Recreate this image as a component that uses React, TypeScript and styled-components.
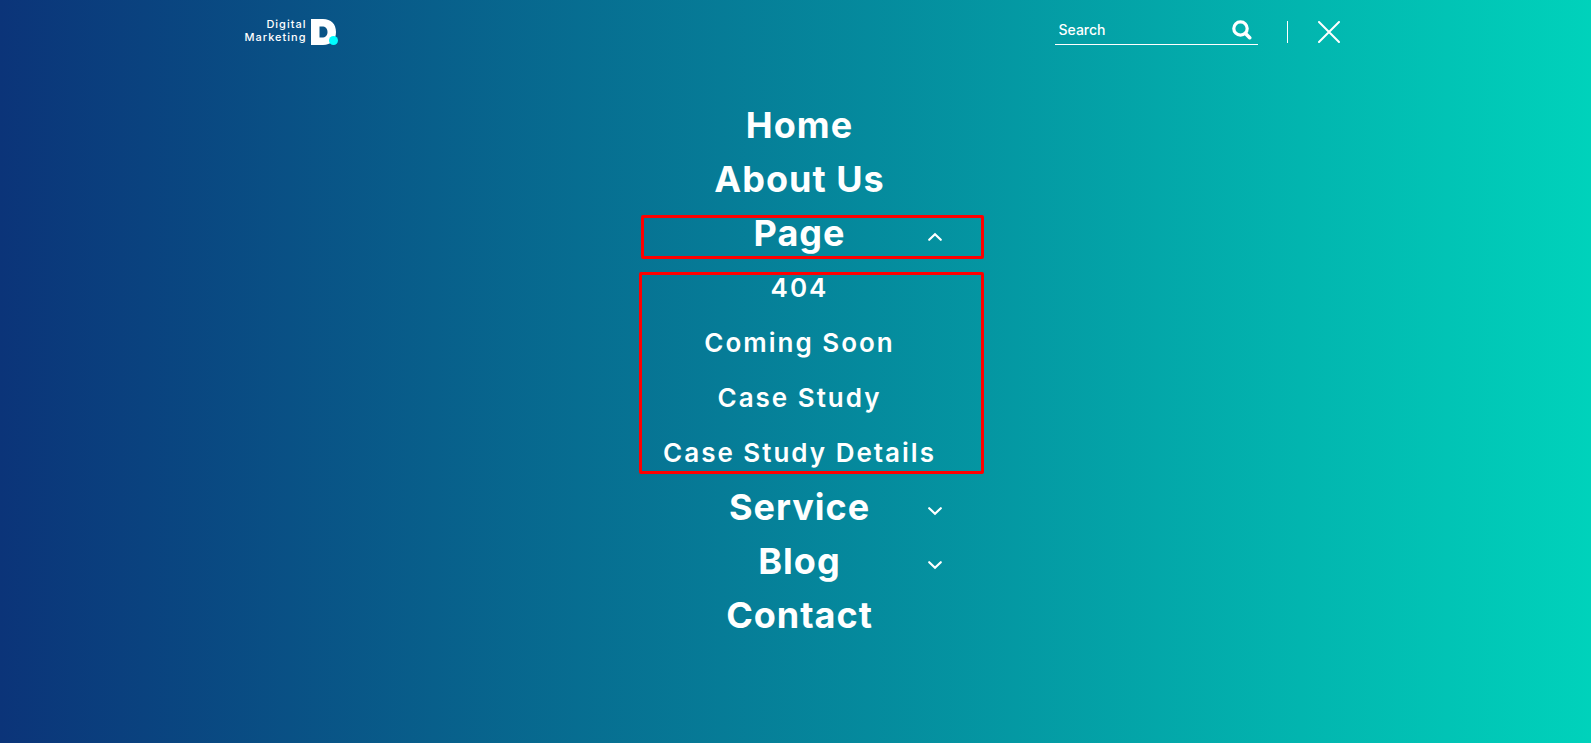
import React, { useState } from "react";
import styled, { createGlobalStyle } from "styled-components";

const GlobalStyle = createGlobalStyle`
  * { box-sizing: border-box; }
  body {
    margin: 0;
    color: #fff;
    font-family: Inter, "Liberation Sans", sans-serif;
  }
`;

const Overlay = styled.div`
  min-height: 100vh;
  background: linear-gradient(90deg, #0b3479 0%, #00d2bb 100%);
`;

const Header = styled.header`
  display: flex;
  align-items: center;
  justify-content: space-between;
  max-width: 1140px;
  height: 64px;
  margin: 0 auto;
  padding: 0 26px 0 19px;
`;

const Logo = styled.a`
  display: flex;
  align-items: center;
  gap: 4px;
  color: inherit;
  text-decoration: none;
`;

const LogoText = styled.span`
  padding-bottom: 2px;
  font-size: 11px;
  font-weight: 500;
  line-height: 13px;
  letter-spacing: 1px;
  text-align: right;
`;

const Tools = styled.div`
  display: flex;
  align-items: center;
`;

const SearchForm = styled.form`
  display: flex;
  align-items: center;
  width: 203px;
  height: 26px;
  margin-right: 29px;
  padding: 0 6px 4px 4px;
  border-bottom: 1px solid #fff;
`;

const SearchInput = styled.input`
  flex: 1;
  min-width: 0;
  padding: 0;
  border: 0;
  outline: 0;
  background: transparent;
  color: #fff;
  font: 500 14px/20px Inter, "Liberation Sans", sans-serif;
  &::placeholder { color: #fff; opacity: 1; }
`;

const IconButton = styled.button`
  display: flex;
  padding: 0;
  border: 0;
  background: none;
  color: #fff;
  cursor: pointer;
`;

const Divider = styled.span`
  width: 1px;
  height: 22px;
  margin-right: 30px;
  background: #fff;
`;

const Nav = styled.nav`
  display: flex;
  justify-content: center;
  padding: 34px 0 40px 8px;
`;

const MenuList = styled.ul`
  width: 288px;
  margin: 0;
  padding: 0;
  list-style: none;
`;

const MenuRow = styled.div`
  position: relative;
  display: grid;
  align-items: center;
  height: 54px;
`;

const MenuLink = styled.a`
  grid-area: 1 / 1;
  justify-self: center;
  color: inherit;
  font-size: 36px;
  font-weight: 700;
  line-height: 54px;
  letter-spacing: 1px;
  white-space: nowrap;
  text-decoration: none;
`;

const Toggle = styled(IconButton)`
  grid-area: 1 / 1;
  justify-self: end;
  padding: 7px 1px 0 0;
`;

const SubList = styled.ul`
  position: relative;
  display: flex;
  flex-direction: column;
  align-items: center;
  margin: 0;
  padding: 0;
  list-style: none;
`;

const SubLink = styled.a`
  display: block;
  color: inherit;
  font-size: 26px;
  font-weight: 600;
  line-height: 55px;
  letter-spacing: 2px;
  white-space: nowrap;
  text-decoration: none;
`;

const Highlight = styled.span<{ $top: number; $bottom: number; $left: number }>`
  position: absolute;
  top: ${(p) => p.$top}px;
  right: -40px;
  bottom: ${(p) => p.$bottom}px;
  left: ${(p) => -p.$left}px;
  border: 3px solid #f00;
  border-radius: 2px;
  pointer-events: none;
`;

const LogoMark = () => (
  <svg width="28" height="27" viewBox="0 0 28 27" aria-hidden="true">
    <path
      fill="#fff"
      fillRule="evenodd"
      d="M0 0H12C20 0 25 5 25 13S20 26 12 26H0ZM8.500 7.500V18.500H11C14.500 18.500 16.500 16.500 16.500 13S14.500 7.500 11 7.500Z"
    />
    <circle cx="22.500" cy="21.500" r="4.500" fill="#00fdff" />
  </svg>
);

const SearchIcon = () => (
  <svg width="20" height="20" viewBox="0 0 20 20" fill="none" stroke="currentColor" aria-hidden="true">
    <circle cx="8.500" cy="8.500" r="6.700" strokeWidth="3.200" />
    <path d="M13.500 13.500L17.700 17.700" strokeWidth="3.600" strokeLinecap="round" />
  </svg>
);

const CloseIcon = () => (
  <svg width="22" height="22" viewBox="0 0 22 22" fill="none" stroke="currentColor" aria-hidden="true">
    <path d="M1 1L21 21M21 1L1 21" strokeWidth="2" strokeLinecap="round" />
  </svg>
);

const Chevron = ({ up }: { up: boolean }) => (
  <svg width="16" height="10" viewBox="0 0 16 10" fill="none" stroke="currentColor" aria-hidden="true">
    <path
      d={up ? "M2.200 7.800L8 2.200L13.800 7.800" : "M2.200 2.200L8 7.800L13.800 2.200"}
      strokeWidth="2.200"
      strokeLinecap="round"
    />
  </svg>
);

interface Item {
  label: string;
  children?: string[];
}

const items: Item[] = [
  { label: "Home" },
  { label: "About Us" },
  { label: "Page", children: ["404", "Coming Soon", "Case Study", "Case Study Details"] },
  { label: "Service", children: [] },
  { label: "Blog", children: [] },
  { label: "Contact" },
];

export default function App() {
  const [open, setOpen] = useState<string | null>("Page");

  return (
    <>
      <GlobalStyle />
      <Overlay>
        <Header>
          <Logo href="#" aria-label="Digital Marketing">
            <LogoText>
              Digital
              <br />
              Marketing
            </LogoText>
            <LogoMark />
          </Logo>
          <Tools>
            <SearchForm role="search" onSubmit={(e) => e.preventDefault()}>
              <SearchInput type="text" placeholder="Search" aria-label="Search" />
              <IconButton type="submit" aria-label="Submit search">
                <SearchIcon />
              </IconButton>
            </SearchForm>
            <Divider />
            <IconButton type="button" aria-label="Close menu">
              <CloseIcon />
            </IconButton>
          </Tools>
        </Header>
        <Nav>
          <MenuList>
            {items.map(({ label, children }) => {
              const expanded = open === label;
              return (
                <li key={label}>
                  <MenuRow>
                    <MenuLink href="#">{label}</MenuLink>
                    {children && (
                      <Toggle
                        type="button"
                        aria-label={`Toggle ${label}`}
                        aria-expanded={expanded}
                        onClick={() => setOpen(expanded ? null : label)}
                      >
                        <Chevron up={expanded} />
                      </Toggle>
                    )}
                    {expanded && <Highlight $top={9} $bottom={1} $left={15} />}
                  </MenuRow>
                  {expanded && children && children.length > 0 && (
                    <SubList>
                      {children.map((child) => (
                        <li key={child}>
                          <SubLink href="#">{child}</SubLink>
                        </li>
                      ))}
                      <Highlight $top={12} $bottom={6} $left={17} />
                    </SubList>
                  )}
                </li>
              );
            })}
          </MenuList>
        </Nav>
      </Overlay>
    </>
  );
}
